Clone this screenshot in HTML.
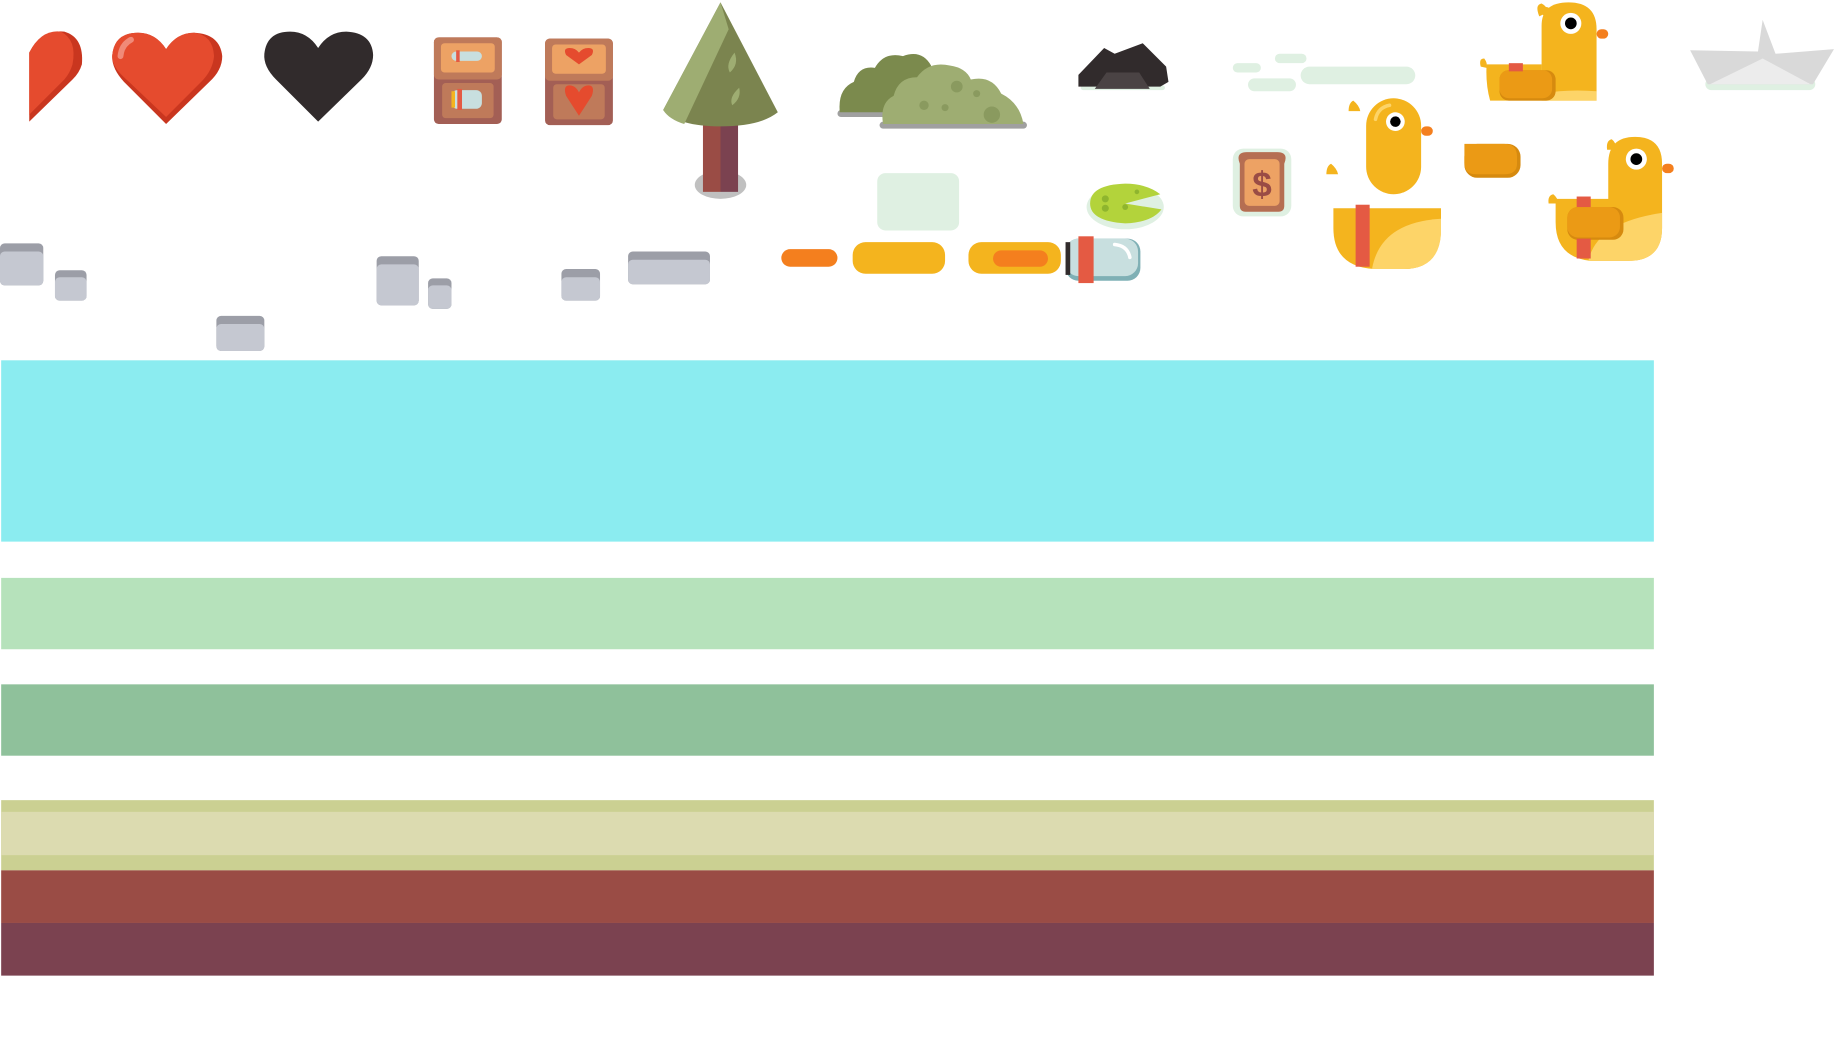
<!DOCTYPE html>
<html><head><meta charset="utf-8"><style>
html,body{margin:0;padding:0;background:#fff;width:1834px;height:1054px;overflow:hidden}
svg{display:block}
</style></head><body>
<svg width="1834" height="1054" viewBox="0 0 1568 901" preserveAspectRatio="none" xmlns="http://www.w3.org/2000/svg">
<rect x="1" y="308" width="1413" height="155" fill="#8becf0"/>
<rect x="1" y="494" width="1413" height="61" fill="#b6e2bb"/>
<rect x="1" y="585" width="1413" height="61" fill="#8fc19b"/>
<rect x="1" y="684" width="1413" height="60" fill="#cbd092"/>
<rect x="1" y="694" width="1413" height="37" fill="#dcdbb0"/>
<rect x="1" y="744" width="1413" height="45" fill="#9a4c45"/>
<rect x="1" y="789" width="1413" height="45" fill="#7b4250"/>

<path d="M25 45 Q35 25 55 27 Q72 32 70 55 Q68 62 62 68 L25 104 Z" fill="#c9361f"/>
<path d="M25 45 Q35 25 52 27 Q66 34 62 55 Q60 62 55 68 L25 98 Z" fill="#e54b2e"/>
<path d="M142 106 L106 70 Q95 58 96 47 Q98 28 118 28 Q133 28 142 42 Q151 28 166 28 Q188 29 190 48 Q190 60 179 70 Z" fill="#c9361f"/>
<path d="M142 100 L106 66 Q95 56 96 47 Q98 28 118 28 Q133 28 142 42 Q151 28 166 28 Q182 30 183 48 Q182 60 172 70 Z" fill="#e54b2e"/>
<path d="M103 48 Q104 38 112 34" stroke="#f08a78" stroke-width="5" fill="none" stroke-linecap="round"/>
<path d="M272 104 L236 68 Q225 57 226 46 Q228 27 248 27 Q263 27 272 41 Q281 27 296 27 Q318 28 319 47 Q319 58 309 68 Z" fill="#312b2c"/>

<rect x="371" y="32" width="58" height="74" rx="4" fill="#a35f55"/>
<rect x="371" y="32" width="58" height="36" rx="4" fill="#bf7a5a"/>
<rect x="377" y="37" width="46" height="25" rx="3" fill="#eda264"/>
<rect x="378" y="71" width="44" height="30" rx="3" fill="#bf7a5a"/>
<rect x="386" y="44" width="26" height="8" rx="4" fill="#c8dfdf"/><rect x="390" y="43" width="3" height="10" fill="#e45a43"/>
<rect x="386" y="77" width="26" height="16" rx="5" fill="#c8dfdf"/><rect x="391" y="76" width="4" height="18" fill="#e45a43"/><rect x="386" y="78" width="3" height="14" fill="#f4b41e"/>
<rect x="466" y="33" width="58" height="74" rx="4" fill="#a35f55"/>
<rect x="466" y="33" width="58" height="36" rx="4" fill="#bf7a5a"/>
<rect x="472" y="38" width="46" height="25" rx="3" fill="#eda264"/>
<rect x="473" y="72" width="44" height="30" rx="3" fill="#bf7a5a"/>
<path d="M495 55 L484 47 Q481 41 487 41 Q492 41 495 45 Q498 41 503 41 Q509 41 506 47 Z" fill="#e54b2e"/>
<path d="M495 99 L484 82 Q481 73 487 73 Q492 73 495 79 Q498 73 503 73 Q509 73 506 82 Z" fill="#e54b2e"/>

<ellipse cx="616" cy="158" rx="22" ry="12" fill="#c0c0c0"/>
<rect x="601" y="100" width="15" height="64" fill="#9a4c45"/>
<rect x="616" y="100" width="15" height="64" fill="#7b4250"/>
<path d="M616 2 L665 96 Q650 108 616 108 Q580 108 567 94 Z" fill="#7b844f"/>
<path d="M616 2 L567 94 Q572 102 585 106 L623 25 Z" fill="#9ead72"/>
<path d="M628 45 Q632 55 624 62 Q620 55 628 45Z M632 75 Q634 84 626 90 Q623 83 632 75Z" fill="#9ead72"/>

<rect x="716" y="94" width="80" height="6" rx="3" fill="#a0a0a0"/>
<path d="M718 96 Q716 76 730 70 Q734 56 748 58 Q756 44 772 48 Q788 42 796 56 L800 96 Z" fill="#7b8a4d"/>
<rect x="752" y="104" width="126" height="6" rx="3" fill="#a0a0a0"/>
<path d="M755 106 Q752 88 764 82 Q768 66 784 66 Q794 52 812 56 Q826 58 830 68 Q848 64 856 80 Q872 88 875 106 Z" fill="#9ead72"/>
<g fill="#8a9a5f"><circle cx="790" cy="90" r="4"/><circle cx="818" cy="74" r="5"/><circle cx="848" cy="98" r="7"/><circle cx="808" cy="92" r="3"/><circle cx="835" cy="80" r="3"/></g>

<rect x="750" y="148" width="70" height="49" rx="7" fill="#dff0e2"/>

<g>
<rect x="0" y="208" width="37" height="36" rx="4" fill="#9c9ea7"/><rect x="0" y="215" width="37" height="29" rx="4" fill="#c5c8d1"/>
<rect x="47" y="231" width="27" height="26" rx="4" fill="#9c9ea7"/><rect x="47" y="237" width="27" height="20" rx="4" fill="#c5c8d1"/>
<rect x="185" y="270" width="41" height="30" rx="4" fill="#9c9ea7"/><rect x="185" y="277" width="41" height="23" rx="4" fill="#c5c8d1"/>
<rect x="322" y="219" width="36" height="42" rx="4" fill="#9c9ea7"/><rect x="322" y="226" width="36" height="35" rx="4" fill="#c5c8d1"/>
<rect x="366" y="238" width="20" height="26" rx="4" fill="#9c9ea7"/><rect x="366" y="244" width="20" height="20" rx="4" fill="#c5c8d1"/>
<rect x="480" y="230" width="33" height="27" rx="4" fill="#9c9ea7"/><rect x="480" y="237" width="33" height="20" rx="4" fill="#c5c8d1"/>
<rect x="537" y="215" width="70" height="28" rx="4" fill="#9c9ea7"/><rect x="537" y="222" width="70" height="21" rx="4" fill="#c5c8d1"/>
</g>

<rect x="668" y="213" width="48" height="15" rx="7.5" fill="#f47f1e"/>
<rect x="729" y="207" width="79" height="27" rx="11" fill="#f4b41e"/>
<rect x="828" y="207" width="79" height="27" rx="11" fill="#f4b41e"/>
<rect x="849" y="214" width="47" height="14" rx="7" fill="#f47f1e"/>
<rect x="911" y="204" width="64" height="36" rx="11" fill="#7fb0b5"/>
<rect x="911" y="204" width="62" height="32" rx="11" fill="#c8dfdf"/>
<rect x="911" y="207" width="4" height="28" fill="#312b2c"/>
<rect x="922" y="202" width="13" height="40" fill="#e45a43"/>
<path d="M953 209 Q964 210 966 220" stroke="#fff" stroke-width="3" fill="none" stroke-linecap="round"/>

<rect x="924" y="73" width="72" height="4" rx="2" fill="#dff0e2"/>
<path d="M922 74 L922 64 L944 41 L953 46 L977 37 L997 57 L999 70 L992 74 Z" fill="#312b2c"/>
<path d="M936 76 L946 62 L974 62 L983 76 Z" fill="#4a4344"/>

<g fill="#dff0e2">
<rect x="1054" y="54" width="24" height="8" rx="4"/><rect x="1090" y="46" width="27" height="8" rx="4"/>
<rect x="1067" y="67" width="41" height="11" rx="5.5"/><rect x="1112" y="57" width="98" height="15" rx="7.5"/>
</g>

<ellipse cx="962" cy="177" rx="33" ry="19" fill="#dff0e2"/>
<path d="M962 174 L992 166 Q980 157 962 157 Q932 158 932 174 Q932 189 962 191 Q985 190 993 179 Z" fill="#b3d33b"/>
<g fill="#8fb52e"><circle cx="945" cy="170" r="3"/><circle cx="945" cy="178" r="3"/><circle cx="962" cy="177" r="2.5"/><circle cx="972" cy="164" r="2"/></g>

<rect x="1054" y="127" width="50" height="58" rx="9" fill="#dff0e2"/>
<path d="M1060 140 Q1056 130 1066 130 L1092 130 Q1102 130 1098 140 L1098 176 Q1098 181 1093 181 L1065 181 Q1060 181 1060 176 Z" fill="#b56e52"/>
<rect x="1064" y="136" width="30" height="40" rx="4" fill="#eda264"/>
<text x="1079" y="168" font-family="Liberation Sans, sans-serif" font-weight="bold" font-size="30" fill="#9a4c45" text-anchor="middle">$</text>

<g>
<path d="M1316 14 Q1312 4 1318 3 Q1322 5 1324 10 Z" fill="#f4b41e"/>
<circle cx="1322" cy="10" r="4" fill="#f4b41e"/>
<path d="M1318 86 L1318 22 Q1318 2 1341 2 Q1365 2 1365 25 L1365 86 Z" fill="#f4b41e"/>
<path d="M1271 55 L1318 55 L1318 86 L1274 86 Q1270 72 1271 55 Z" fill="#f4b41e"/>
<path d="M1318 80 Q1340 76 1365 78 L1365 86 L1318 86 Z" fill="#fdd468"/>
<rect x="1282" y="60" width="48" height="26" rx="8" fill="#d68a0f"/>
<rect x="1282" y="60" width="45" height="24" rx="8" fill="#eb9a15"/>
<rect x="1290" y="54" width="12" height="7" fill="#e45a43"/>
<circle cx="1343" cy="20" r="9" fill="#fff"/><circle cx="1343" cy="20" r="5" fill="#000"/>
<rect x="1365" y="25" width="10" height="8" rx="4" fill="#f47f1e"/>
<path d="M1266 57 Q1264 50 1269 50 Q1272 54 1271 58 Z" fill="#f4b41e"/>
</g>

<path d="M1153 95 Q1153 88 1157 86 Q1162 90 1163 95 Z" fill="#f4b41e"/>
<path d="M1134 149 Q1134 142 1138 140 Q1143 144 1144 149 Z" fill="#f4b41e"/>
<rect x="1168" y="84" width="47" height="82" rx="23.5" fill="#f4b41e"/>
<circle cx="1193" cy="104" r="8" fill="#fff"/><circle cx="1193" cy="104" r="4.5" fill="#000"/>
<rect x="1215" y="108" width="10" height="8" rx="4" fill="#f47f1e"/>
<path d="M1176 102 Q1178 92 1188 90" stroke="#fdd468" stroke-width="3" fill="none" stroke-linecap="round"/>
<path d="M1140 178 L1232 178 L1232 195 Q1232 230 1200 230 L1175 230 Q1140 228 1140 195 Z" fill="#f4b41e"/>
<path d="M1173 230 Q1180 190 1232 187 L1232 200 Q1230 230 1200 230 Z" fill="#fdd468"/>
<rect x="1159" y="175" width="12" height="53" fill="#e45a43"/>

<rect x="1252" y="123" width="48" height="29" rx="11" fill="#d68a0f"/>
<path d="M1252 123 L1286 123 Q1297 123 1297 134 L1297 140 Q1297 149 1286 149 L1262 149 Q1252 149 1252 139 Z" fill="#eb9a15"/>

<path d="M1374 128 Q1373 120 1378 119 Q1382 122 1382 128 Z" fill="#f4b41e"/>
<path d="M1324 174 Q1323 167 1328 166 Q1332 169 1332 174 Z" fill="#f4b41e"/>
<path d="M1375 170 L1375 140 Q1375 117 1398 117 Q1421 117 1421 140 L1421 195 Q1421 223 1392 223 L1360 223 Q1330 220 1330 190 L1330 170 Z" fill="#f4b41e"/>
<path d="M1358 223 Q1365 190 1421 182 L1421 195 Q1421 223 1392 223 Z" fill="#fdd468"/>
<rect x="1340" y="177" width="48" height="28" rx="9" fill="#d68a0f"/>
<rect x="1340" y="177" width="45" height="26" rx="9" fill="#eb9a15"/>
<rect x="1348" y="168" width="12" height="9" fill="#e45a43"/>
<rect x="1348" y="204" width="12" height="17" fill="#e45a43"/>
<circle cx="1399" cy="136" r="9" fill="#fff"/><circle cx="1399" cy="136" r="5" fill="#000"/>
<rect x="1421" y="140" width="10" height="8" rx="4" fill="#f47f1e"/>

<rect x="1458" y="67" width="94" height="10" rx="5" fill="#dff0e2"/>
<path d="M1445 43 L1503 44 L1507 17 L1518 46 L1568 42 L1550 72 L1460 72 Z" fill="#d9d9d9"/>
<path d="M1507 50 L1462 72 L1548 72 Z" fill="#ececec"/>
</svg>
</body></html>
